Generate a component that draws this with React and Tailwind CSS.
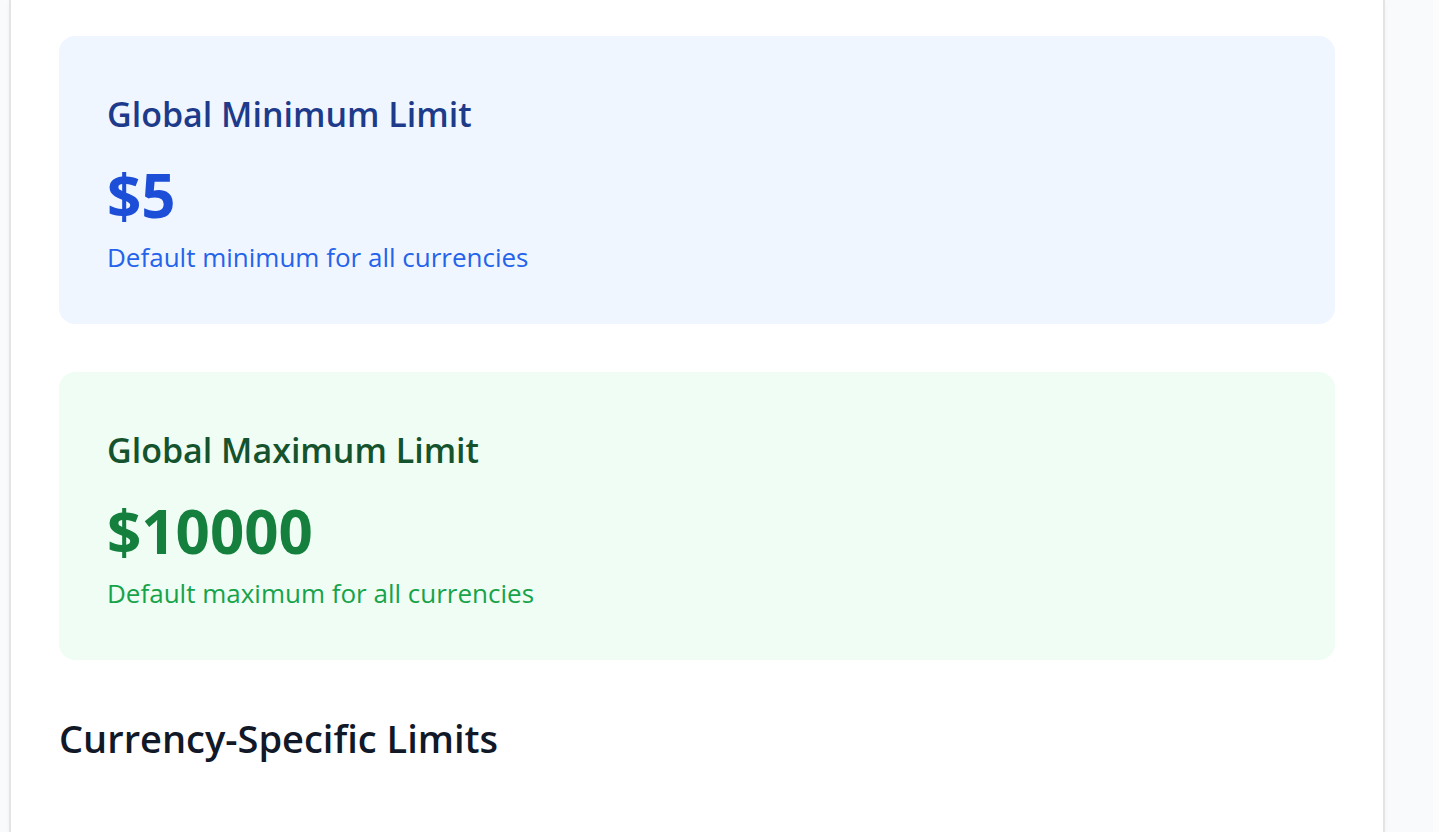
function LimitCard({ title, amount, note, card, titleColor, amountColor, noteColor }) {
  return (
    <section className={`rounded-2xl p-12 ${card}`}>
      <h3 className={`text-[34px] leading-[60px] font-semibold ${titleColor}`}>{title}</h3>
      <p className={`mt-[19px] text-[60px] leading-[64px] font-bold ${amountColor}`}>{amount}</p>
      <p className={`mt-[11px] text-[26px] leading-[38px] ${noteColor}`}>{note}</p>
    </section>
  );
}

export default function App() {
  return (
    <div className="min-h-screen border-r-6 border-[#fcfcfc] bg-gray-50 pr-12 pl-[9px] font-['Open_Sans','Noto_Sans',sans-serif]">
      <main className="min-h-screen border-x-2 border-[#e4e4e5] bg-white px-12 pt-9 pb-12 shadow-[0_2px_4px_rgba(0,0,0,0.04)]">
        <div className="flex flex-col gap-12">
          <LimitCard
            title="Global Minimum Limit"
            amount="$5"
            note="Default minimum for all currencies"
            card="bg-[#eff6ff]"
            titleColor="text-[#1e3a8a]"
            amountColor="text-[#1d4ed8]"
            noteColor="text-[#2563eb]"
          />
          <LimitCard
            title="Global Maximum Limit"
            amount="$10000"
            note="Default maximum for all currencies"
            card="bg-[#f0fdf4]"
            titleColor="text-[#14532d]"
            amountColor="text-[#15803d]"
            noteColor="text-[#16a34a]"
          />
        </div>
        <h2 className="mt-12 text-[38px] leading-[60px] font-semibold text-[#111827]">
          Currency-Specific Limits
        </h2>
      </main>
    </div>
  );
}
